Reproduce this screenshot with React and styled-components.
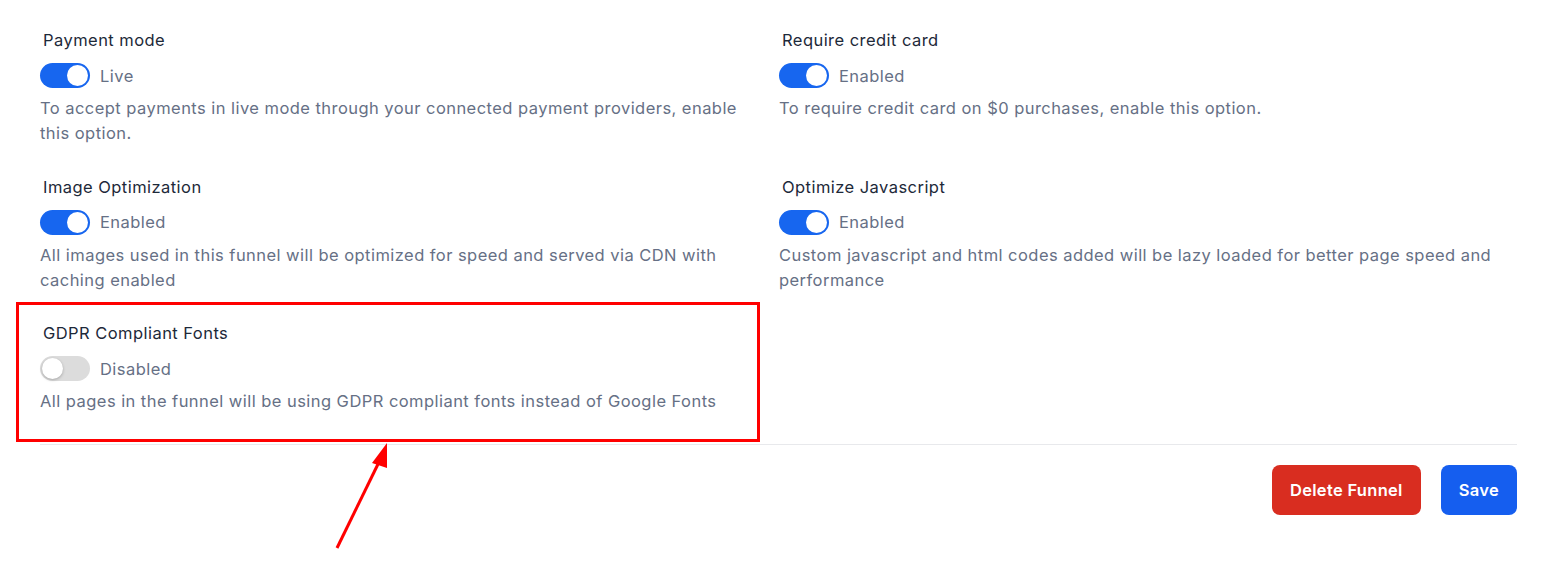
import React from 'react'
import styled, { createGlobalStyle } from 'styled-components'

const GlobalStyle = createGlobalStyle`
  body {
    margin: 0;
    background: #ffffff;
    font-family: Inter, "Noto Sans", sans-serif;
  }
`

const Page = styled.div`
  position: relative;
  width: 1560px;
  height: 564px;
  box-sizing: border-box;
  padding: 28px 43px 0 40px;
  letter-spacing: 0.45px;
`

const Grid = styled.div`
  display: grid;
  grid-template-columns: 739px 1fr;
  row-gap: 28.5px;
`

const Field = styled.div`
  display: flex;
  flex-direction: column;
  padding-right: 18px;
`

const Label = styled.div`
  margin-left: 3px;
  font-size: 16.5px;
  line-height: 24px;
  color: #1d2939;
`

const ToggleRow = styled.div`
  display: flex;
  align-items: center;
  gap: 10px;
  margin-top: 11px;
  height: 25px;
`

const Track = styled.span`
  position: relative;
  display: inline-block;
  width: 50px;
  height: 25px;
  border-radius: 13px;
  background: ${(p) => (p.$on ? '#1766ef' : '#dcdcdc')};
  box-sizing: border-box;
`

const Knob = styled.span`
  position: absolute;
  top: 2px;
  left: ${(p) => (p.$on ? '27px' : '2px')};
  width: 21px;
  height: 21px;
  border-radius: 50%;
  background: #ffffff;
  box-shadow: ${(p) => (p.$on ? 'none' : '0 1px 3px rgba(0, 0, 0, 0.25)')};
`

const State = styled.span`
  font-size: 16.5px;
  line-height: 24px;
  color: #667085;
`

const Desc = styled.p`
  margin: 8px 0 0;
  font-size: 16.5px;
  line-height: 25px;
  color: #667085;
`

const Divider = styled.hr`
  margin: 30px 0 0;
  border: none;
  border-top: 1px solid #e8e9ec;
`

const Actions = styled.div`
  display: flex;
  justify-content: flex-end;
  gap: 20px;
  margin-top: 20px;
`

const Button = styled.button`
  height: 50px;
  padding: 0 18px;
  border: none;
  border-radius: 8px;
  background: ${(p) => (p.$danger ? '#d92d20' : '#155eef')};
  color: #ffffff;
  font-family: Inter, "Noto Sans", sans-serif;
  font-size: 16.5px;
  font-weight: 600;
  letter-spacing: 0.3px;
  cursor: pointer;
`

const Highlight = styled.div`
  position: absolute;
  left: 16px;
  top: 302px;
  width: 744px;
  height: 140px;
  box-sizing: border-box;
  border: 3px solid #ff0000;
  pointer-events: none;
`

const Arrow = styled.svg`
  position: absolute;
  left: 0;
  top: 0;
  pointer-events: none;
`

const settings = [
  {
    label: 'Payment mode',
    on: true,
    state: 'Live',
    desc: 'To accept payments in live mode through your connected payment providers, enable this option.',
  },
  {
    label: 'Require credit card',
    on: true,
    state: 'Enabled',
    desc: 'To require credit card on $0 purchases, enable this option.',
  },
  {
    label: 'Image Optimization',
    on: true,
    state: 'Enabled',
    desc: 'All images used in this funnel will be optimized for speed and served via CDN with caching enabled',
  },
  {
    label: 'Optimize Javascript',
    on: true,
    state: 'Enabled',
    desc: 'Custom javascript and html codes added will be lazy loaded for better page speed and performance',
  },
  {
    label: 'GDPR Compliant Fonts',
    on: false,
    state: 'Disabled',
    desc: 'All pages in the funnel will be using GDPR compliant fonts instead of Google Fonts',
  },
]

const Setting = ({ label, on, state, desc }) => (
  <Field>
    <Label>{label}</Label>
    <ToggleRow>
      <Track $on={on}>
        <Knob $on={on} />
      </Track>
      <State>{state}</State>
    </ToggleRow>
    <Desc>{desc}</Desc>
  </Field>
)

export default function App() {
  return (
    <Page>
      <GlobalStyle />
      <Grid>
        {settings.map((s) => (
          <Setting key={s.label} {...s} />
        ))}
      </Grid>
      <Divider />
      <Actions>
        <Button $danger>Delete Funnel</Button>
        <Button>Save</Button>
      </Actions>
      <Highlight />
      <Arrow width="1560" height="564" viewBox="0 0 1560 564">
        <line x1="337" y1="548" x2="380" y2="460" stroke="#ff0000" strokeWidth="3" />
        <polygon points="387,443 372,463 387,468" fill="#ff0000" />
      </Arrow>
    </Page>
  )
}
